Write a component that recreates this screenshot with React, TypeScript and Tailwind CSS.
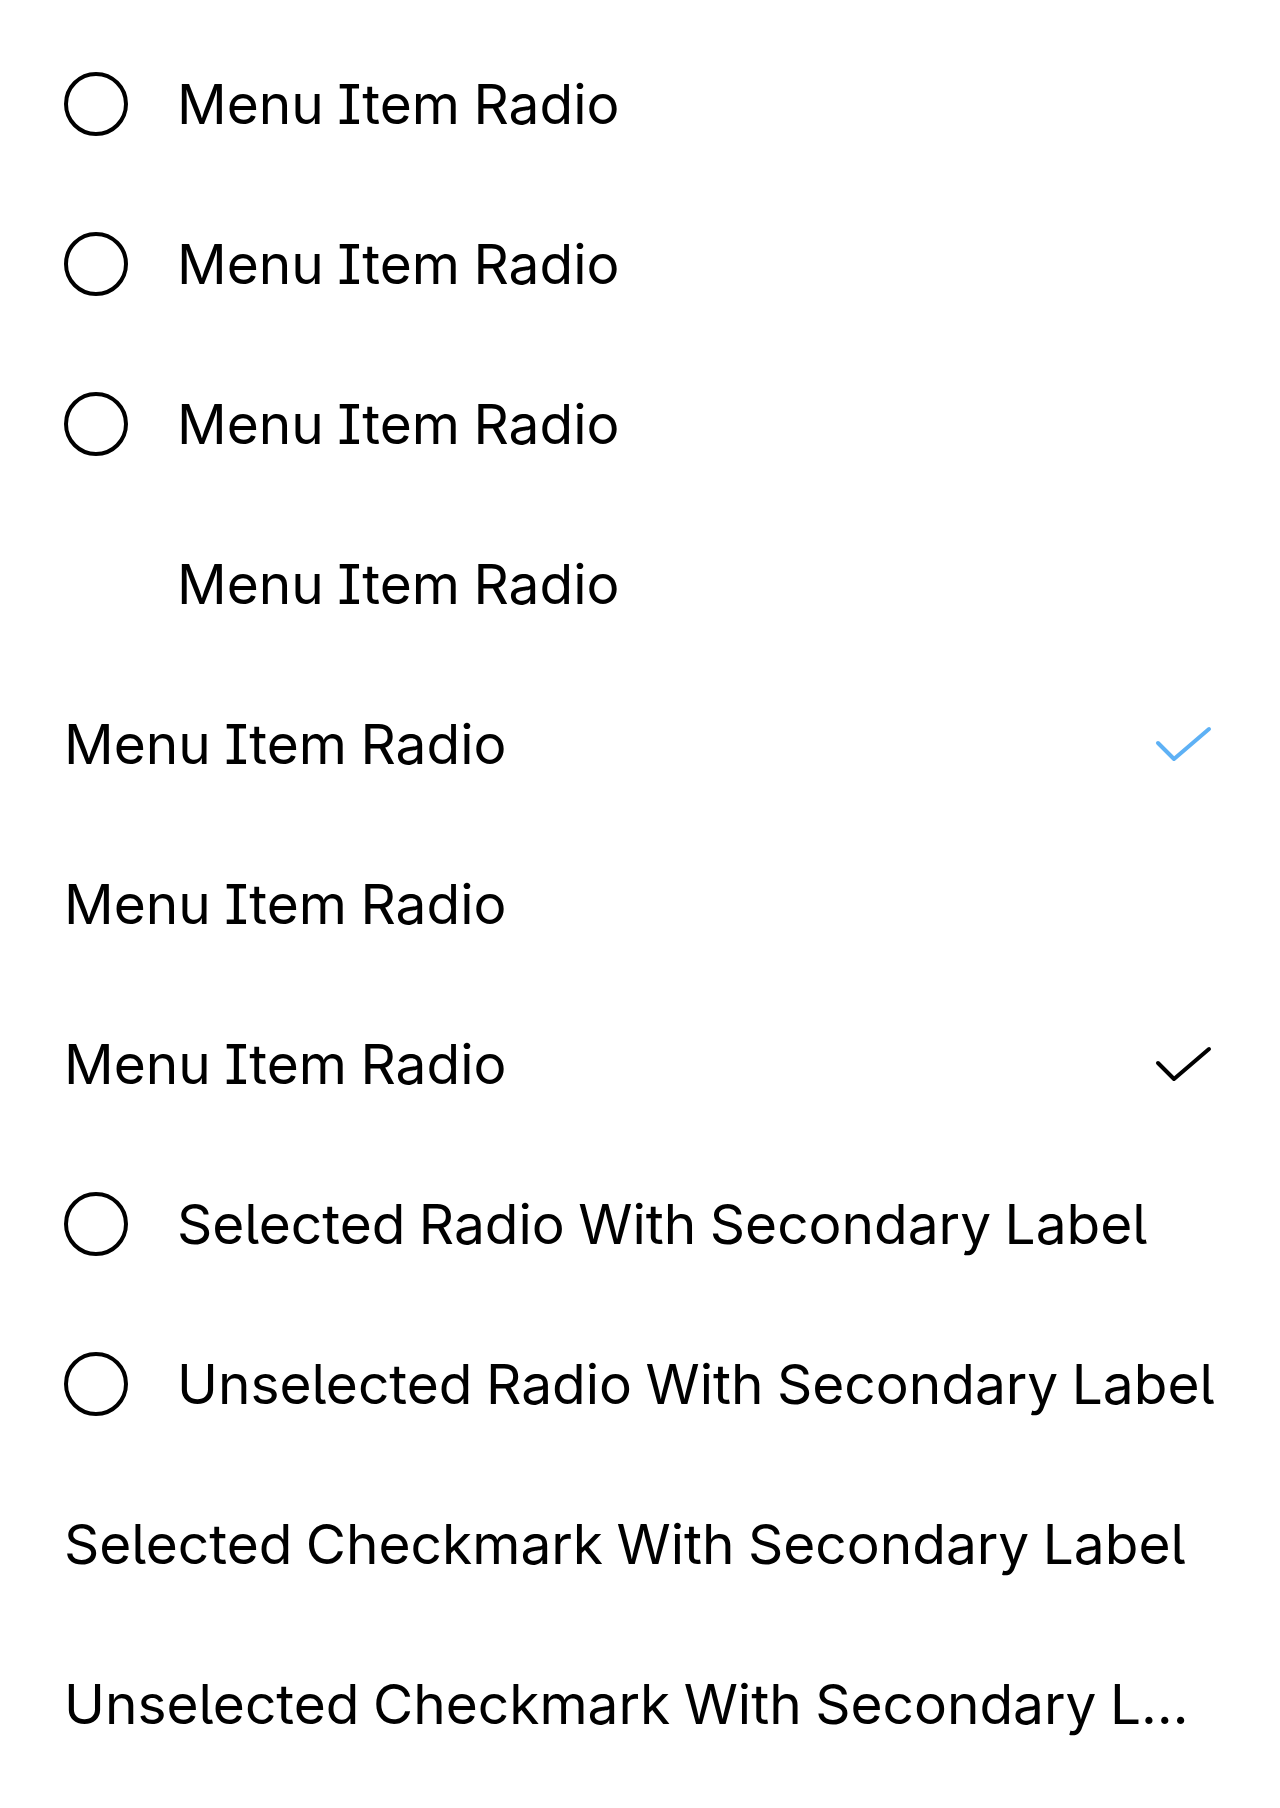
import React from "react";

type Row = { label: string; left?: "radio" | "blank"; right?: "blue" | "black" };

const rows: Row[] = [
  { label: "Menu Item Radio", left: "radio" },
  { label: "Menu Item Radio", left: "radio" },
  { label: "Menu Item Radio", left: "radio" },
  { label: "Menu Item Radio", left: "blank" },
  { label: "Menu Item Radio", right: "blue" },
  { label: "Menu Item Radio" },
  { label: "Menu Item Radio", right: "black" },
  { label: "Selected Radio With Secondary Label", left: "radio" },
  { label: "Unselected Radio With Secondary Label", left: "radio" },
  { label: "Selected Checkmark With Secondary Label" },
  { label: "Unselected Checkmark With Secondary Label" },
];

function Check({ color }: { color: string }) {
  return (
    <svg width="62" height="40" viewBox="0 0 62 40" fill="none" className="shrink-0">
      <path d="M4 19 L20 35 L55 5" stroke={color} strokeWidth="4" strokeLinecap="round" strokeLinejoin="round" />
    </svg>
  );
}

export default function App() {
  return (
    <div className="w-[1280px] h-[1808px] bg-white py-[24px] px-[64px] text-black [font-family:Inter,'Noto_Sans',sans-serif] [font-feature-settings:'cv05','cv08']">
      {rows.map((r, i) => (
        <div key={i} className="h-[160px] flex items-center">
          {r.left === "radio" && (
            <div className="w-[64px] h-[64px] rounded-full border-[4px] border-black shrink-0 mr-[49px]" />
          )}
          {r.left === "blank" && <div className="w-[64px] h-[64px] shrink-0 mr-[49px]" />}
          <div className="flex-1 min-w-0 truncate text-[55px] leading-[68px] [word-spacing:-2px]">{r.label}</div>
          {r.right === "blue" && <Check color="#5EB1F5" />}
          {r.right === "black" && <Check color="#000000" />}
        </div>
      ))}
    </div>
  );
}
